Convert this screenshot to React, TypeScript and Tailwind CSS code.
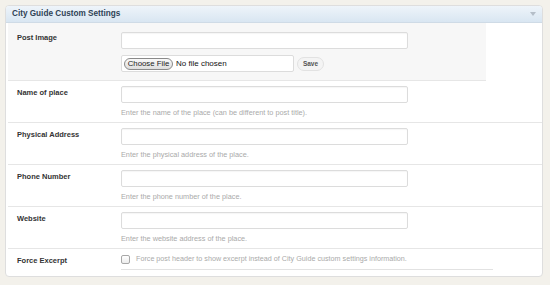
const font = { fontFamily: '"Liberation Sans", Arial, sans-serif' };

const rows = [
  { label: "Name of place", help: "Enter the name of the place (can be different to post title)." },
  { label: "Physical Address", help: "Enter the physical address of the place." },
  { label: "Phone Number", help: "Enter the phone number of the place." },
  { label: "Website", help: "Enter the website address of the place." },
];

function TextInput() {
  return <div className="h-[17px] w-[287px] rounded-[2px] border border-[#dcdcdc] bg-white shadow-[inset_0_1px_1px_rgba(0,0,0,0.04)]" />;
}

export default function App() {
  return (
    <div className="h-[285px] w-[550px] bg-[#f3f1eb] pl-[5px] pt-[5px]" style={font}>
      <div className="h-[272px] w-[538px] overflow-hidden rounded-[4px] border border-[#dedede] bg-white">
        <div className="flex h-[17px] items-center justify-between border-b border-[#cfdbe6] bg-gradient-to-b from-[#eef4fa] to-[#d9e6f2] pl-[6px]">
          <span className="text-[8.2px] font-bold text-[#2f4255]">City Guide Custom Settings</span>
          <div className="flex h-full w-[18px] items-center justify-center">
            <div className="h-0 w-0 border-x-[3px] border-t-[4px] border-x-transparent border-t-[#b5bec8]" />
          </div>
        </div>

        <div className="pl-[2px]">
          <div className="flex h-[58px] w-[478px] border-b border-[#e6e6e6] bg-[#f7f7f7]">
            <div className="w-[113px] pl-[9px] pt-[9px] text-[7.5px] font-bold text-[#333]">Post Image</div>
            <div className="pt-[9px]">
              <TextInput />
              <div className="mt-[6px] flex items-center gap-[3px]">
                <div className="flex h-[17px] w-[173px] items-center gap-[3px] rounded-[2px] border border-[#dcdcdc] bg-white pl-[2px]">
                  <span className="flex h-[12px] w-[49px] items-center justify-center rounded-full border border-[#8a8a8a] bg-gradient-to-b from-[#fafafa] to-[#dedede] text-[7.8px] text-[#222]">
                    Choose File
                  </span>
                  <span className="text-[8px] text-[#111]">No file chosen</span>
                </div>
                <span className="flex h-[14px] w-[27px] items-center justify-center rounded-full border border-[#e2e2e2] bg-[#f4f4f4] text-[6.5px] font-bold text-[#555]">
                  Save
                </span>
              </div>
            </div>
          </div>

          {rows.map((r) => (
            <div key={r.label} className="flex h-[42px] border-b border-[#e6e6e6]">
              <div className="w-[113px] pl-[9px] pt-[6px] text-[7.5px] font-bold text-[#333]">{r.label}</div>
              <div className="pt-[5px]">
                <TextInput />
                <p className="mt-[5px] text-[7.3px] leading-[9px] text-[#aaa]">{r.help}</p>
              </div>
            </div>
          ))}

          <div className="flex h-[22px]">
            <div className="w-[113px] pl-[9px] pt-[6px] text-[7.5px] font-bold text-[#333]">Force Excerpt</div>
            <div className="flex h-[21px] w-[372px] items-center gap-[6px] border-b border-[#e2e2e2]">
              <div className="h-[9px] w-[9px] rounded-[2px] border border-[#a8a8a8] bg-gradient-to-b from-white to-[#ececec]" />
              <span className="text-[7.2px] text-[#aaa]">
                Force post header to show excerpt instead of City Guide custom settings information.
              </span>
            </div>
          </div>
        </div>
      </div>
    </div>
  );
}
